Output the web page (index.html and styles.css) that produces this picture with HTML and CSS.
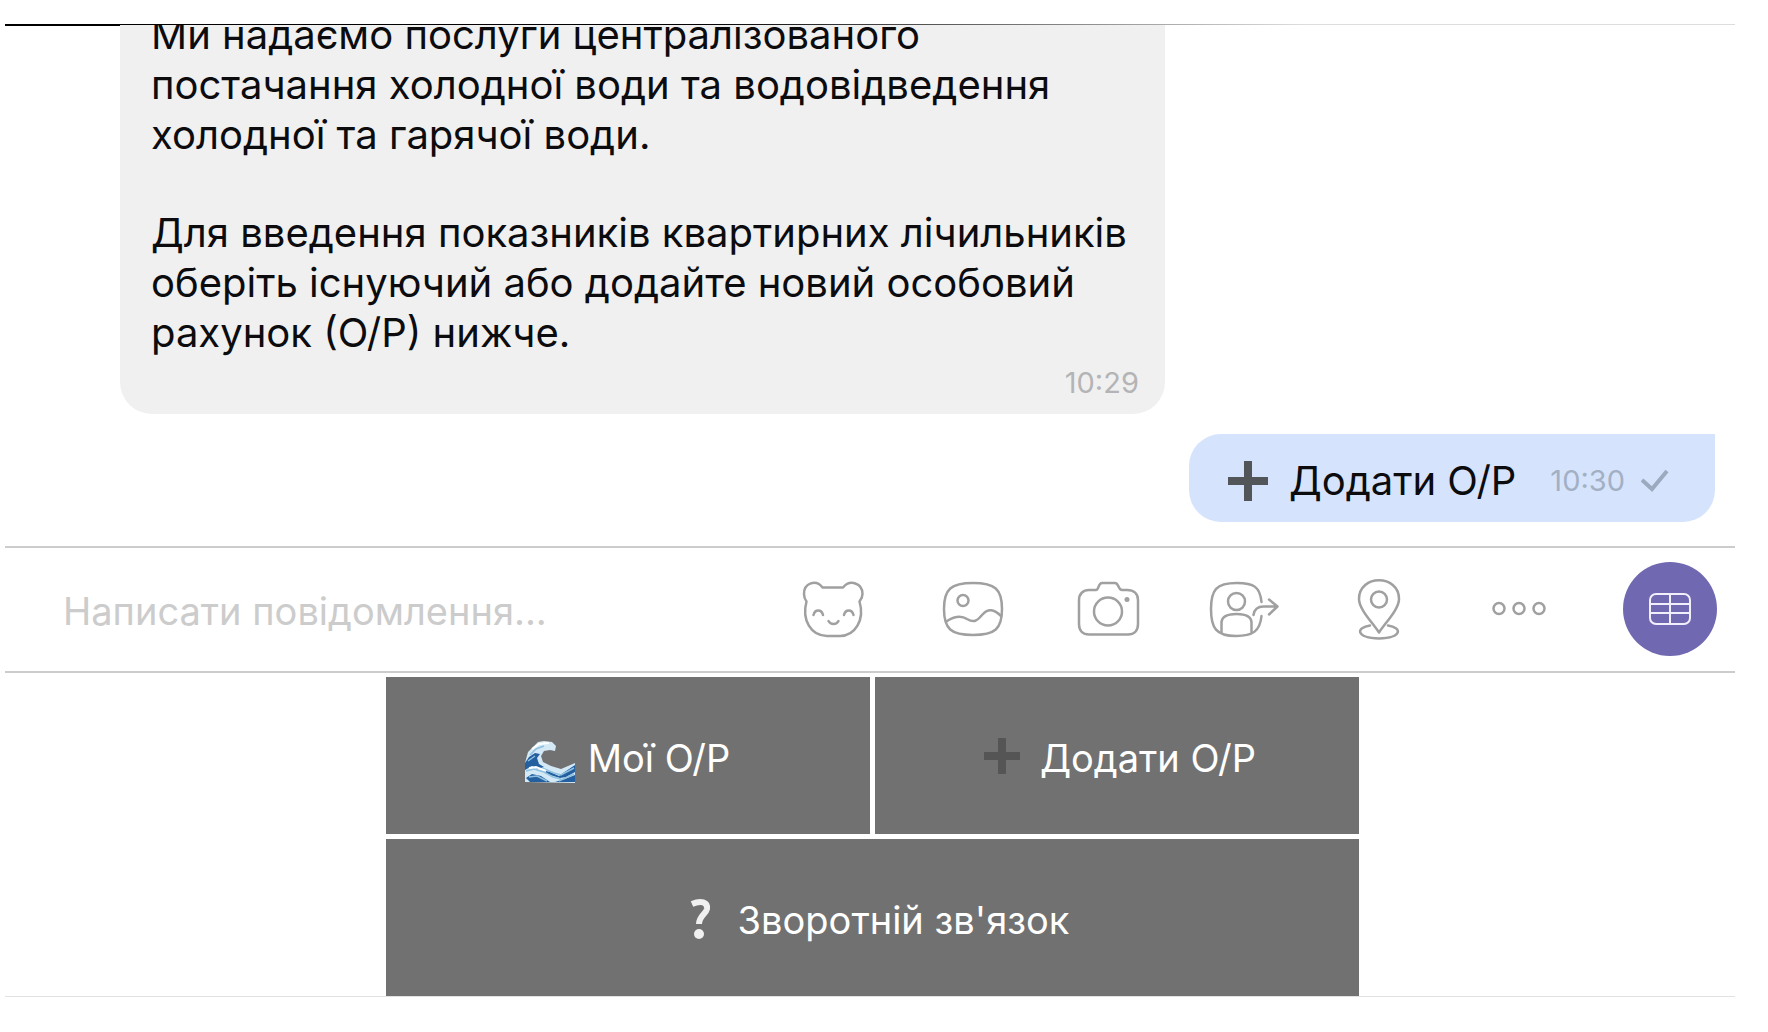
FILE: index.html
```html
<!DOCTYPE html>
<html lang="uk">
<head>
  <meta charset="utf-8">
  <title>Чат</title>
  <link rel="stylesheet" href="styles.css">
</head>
<body>
  <main class="app">
    <section class="chat">
      <div class="message incoming">
        <p>Ми надаємо послуги централізованого<br>постачання холодної води та водовідведення<br>холодної та гарячої води.</p>
        <p>Для введення показників квартирних лічильників<br>оберіть існуючий або додайте новий особовий<br>рахунок (О/Р) нижче.</p>
        <time class="time">10:29</time>
      </div>
      <div class="message outgoing">
        <svg class="emoji" viewBox="0 0 50 50"><path d="M21 5h8v16h16v8H29v16h-8V29H5v-8h16z" fill="#525659"/></svg>
        <span>Додати О/Р</span>
        <time class="time">10:30</time>
        <svg class="check" viewBox="0 0 28 24"><path d="M1 11l10 9L26 2"/></svg>
      </div>
    </section>

    <form class="composer">
      <input class="composer-input" type="text" placeholder="Написати повідомлення..." aria-label="Написати повідомлення">
      <div class="tools">
        <button type="button" class="tool" aria-label="Стікери">
          <svg viewBox="0 0 80 64"><path d="M29.500 10.500H50C57 2 69.500 6 69.500 17c0 3-1 5-3 7.500C72 43 62 59 47 59H34C18 59 8.500 43 13.500 24.500 11.500 22 11 20 11 17 11 6 23 2 29.500 10.500z"/><path d="M20.500 38c1.500-6 8-6 9.500 0M51 38c1.500-6 8-6 9.500 0M35.500 44c2 4 8 4 10 0"/></svg>
        </button>
        <button type="button" class="tool" aria-label="Галерея">
          <svg viewBox="0 0 80 64"><path d="M43 6c22 0 29 6 29 26s-7 26-29 26-29-6-29-26 7-26 29-26z"/><circle cx="33" cy="23.500" r="5.500"/><path d="M17 44c8-5 14-6 20-2 7 4 10 2 15-4 6-7 12-6 19 1"/></svg>
        </button>
        <button type="button" class="tool" aria-label="Камера">
          <svg viewBox="0 0 80 64"><path d="M29 13c3 0 2-7 6-7h13c4 0 3 7 7 7h5c7 0 11 4 11 10v24c0 7-4 10.500-10 10.500H22c-6 0-10-3.500-10-10.500V23c0-6 4-10 10-10z"/><circle cx="41" cy="34.500" r="14"/><circle class="solid" cx="60" cy="22.500" r="2.500"/></svg>
        </button>
        <button type="button" class="tool" aria-label="Контакт">
          <svg viewBox="0 0 80 64"><path d="M57.500 25C56 10 50 6 33 6 12 6 7 13 7 32s5 27 25 27c17 0 24-5 25.500-20"/><circle cx="32.500" cy="24.500" r="8.500"/><path d="M17.500 55V46c0-7 6-9 15-9s15 2 15 9v9M49.500 38c1-7 5-8.500 10-8.500h14M65 22.500l8.500 7-8.500 8"/></svg>
        </button>
        <button type="button" class="tool" aria-label="Геолокація">
          <svg viewBox="0 0 80 64"><path d="M38 55.500C31 45 18 32 18 22c0-25 40-25 40 0 0 10-13 23-20 33.500z"/><circle cx="38" cy="22.500" r="8"/><path d="M29 48.500c-14 2-15 12 9 13 24-1 23-11 9-13"/></svg>
        </button>
        <button type="button" class="tool" aria-label="Більше">
          <svg viewBox="0 0 80 64"><circle cx="21" cy="31.500" r="5.500"/><circle cx="41" cy="31.500" r="5.500"/><circle cx="61" cy="31.500" r="5.500"/></svg>
        </button>
      </div>
      <button type="button" class="keyboard-toggle" aria-label="Клавіатура бота">
        <svg viewBox="0 0 44 34"><rect x="2" y="2" width="40" height="30" rx="6"/><path d="M22 2v30M2 12h40M2 21h40"/></svg>
      </button>
    </form>

    <section class="keyboard">
      <button type="button" class="key">
        <svg class="emoji" viewBox="0 -3 50 50"><path d="M0 46V27L3 16 13 6l6-1 8 1 4 4-1 5-5-1-6 1-3 5 2 6 8 4 10 3 14-6v20z" fill="#d3e9f5"/><path d="M0 27l4-6 6-4 5 1-3 4 2 6 5 3-6 2-6-3-7 4zM1 42l6-4 9 2 9 6H5zM16 34l9 2 9 4 7-5 9-6v7l-9 5-6 1-10-3zM30 46l10-3 10-4v7z" fill="#245f9f"/><path d="M5 19l6-6 8-3M3 25l7-5M1 35l8-2 10 3 9 5 8 2M17 32l12 5 7 2 13-7M4 41l8-1 10 5M34 45l15-7" fill="none" stroke="#8fc0df" stroke-width="1.500"/><path d="M7 13l7-5 10-1M4 32l7-1 10 4" fill="none" stroke="#fff" stroke-width="2"/></svg>
        <span>Мої О/Р</span>
      </button>
      <button type="button" class="key">
        <svg class="emoji" viewBox="0 0 50 50"><path d="M21 5h8v14h14v8H29v14h-8V27H7v-8h14z" fill="#555"/></svg>
        <span>Додати О/Р</span>
      </button>
      <button type="button" class="key wide">
        <svg class="emoji" viewBox="0 0 50 50"><path d="M17 9c9-4 16-2 15 5-1 5-8 7-8 15" fill="none" stroke="#f0f0f0" stroke-width="6"/><circle cx="24" cy="39" r="5" fill="#f0f0f0"/></svg>
        <span>Зворотній зв'язок</span>
      </button>
    </section>
  </main>
</body>
</html>
```

FILE: styles.css
```css
* {
  box-sizing: border-box;
}

body {
  margin: 0;
  height: 100vh;
  padding: 24px 33px 35px 5px;
  background: #fff;
  font-family: Inter, "Liberation Sans", sans-serif;
  font-size: 40px;
  color: #0c0c0e;
}

.app {
  display: flex;
  flex-direction: column;
  height: 100%;
  border-bottom: 1px solid #e2e2e2;
  background:
    linear-gradient(to right, #000 40%, #ddd 75%) top / 100% 1px no-repeat,
    linear-gradient(to right, #000 20%, #fff 40%) top / 100% 2px no-repeat;
}

.chat {
  flex: 1;
  min-height: 0;
  margin-top: 1px;
  padding: 0 20px 24px 115px;
  display: flex;
  flex-direction: column;
  justify-content: flex-end;
  align-items: flex-start;
  gap: 20px;
  overflow: hidden;
}

.message {
  flex-shrink: 0;
  border-radius: 32px;
}

.message p {
  margin: 0 0 48px;
  line-height: 50px;
  white-space: nowrap;
}

.incoming {
  padding: 32px 26px 14px 31px;
  background: #f0f0f0;
  display: flex;
  flex-direction: column;
}

.incoming p:nth-child(2) {
  margin-bottom: 8px;
  padding-right: 12px;
}

.incoming .time {
  align-self: flex-end;
}

.time {
  font-size: 29px;
  line-height: 34px;
  color: #b4b4b6;
}

.outgoing {
  align-self: flex-end;
  height: 88px;
  padding: 5px 46px 0 34px;
  border-top-right-radius: 0;
  background: #d5e4fc;
  display: flex;
  align-items: center;
}

.outgoing span {
  margin: 0 34px 0 16px;
}

.outgoing .time {
  color: #a3b0c4;
}

.emoji {
  width: 50px;
  height: 50px;
}

.check {
  width: 28px;
  height: 24px;
  margin-left: 16px;
  fill: none;
  stroke: #9caabf;
  stroke-width: 4;
}

.composer {
  height: 127px;
  border-top: 2px solid #ccc;
  border-bottom: 2px solid #ccc;
  padding: 0 18px 2px 58px;
  display: flex;
  align-items: center;
}

.composer-input {
  flex: 1;
  min-width: 0;
  padding: 4px 0 0;
  border: 0;
  outline: 0;
  background: none;
  font: inherit;
  font-size: 38px;
}

.composer-input::placeholder {
  color: #ccc;
  opacity: 1;
}

.tools {
  display: flex;
  margin-right: 37px;
}

.tool {
  width: 137px;
  padding: 0;
  border: 0;
  background: none;
  display: flex;
  justify-content: center;
}

.tool svg {
  width: 80px;
  height: 64px;
  fill: none;
  stroke: #a0a0a0;
  stroke-width: 2.5;
  stroke-linecap: round;
  stroke-linejoin: round;
}

.tool .solid {
  fill: #a0a0a0;
  stroke: none;
}

.keyboard-toggle {
  width: 94px;
  height: 94px;
  padding: 0;
  border: 0;
  border-radius: 50%;
  background: #7068b0;
  display: flex;
  align-items: center;
  justify-content: center;
}

.keyboard-toggle svg {
  width: 44px;
  height: 34px;
  fill: none;
  stroke: #f2effc;
  stroke-width: 2;
}

.keyboard {
  width: 100%;
  max-width: 977px;
  margin: 4px auto 0;
  padding-left: 4px;
  display: grid;
  grid-template-columns: 1fr 1fr;
  gap: 5px;
}

.key {
  height: 157px;
  padding: 4px 0 0;
  border: 0;
  background: #717171;
  color: #fff;
  font-family: inherit;
  font-size: 38px;
  display: flex;
  align-items: center;
  justify-content: center;
  gap: 13px;
}

.wide {
  grid-column: 1 / -1;
}
```
